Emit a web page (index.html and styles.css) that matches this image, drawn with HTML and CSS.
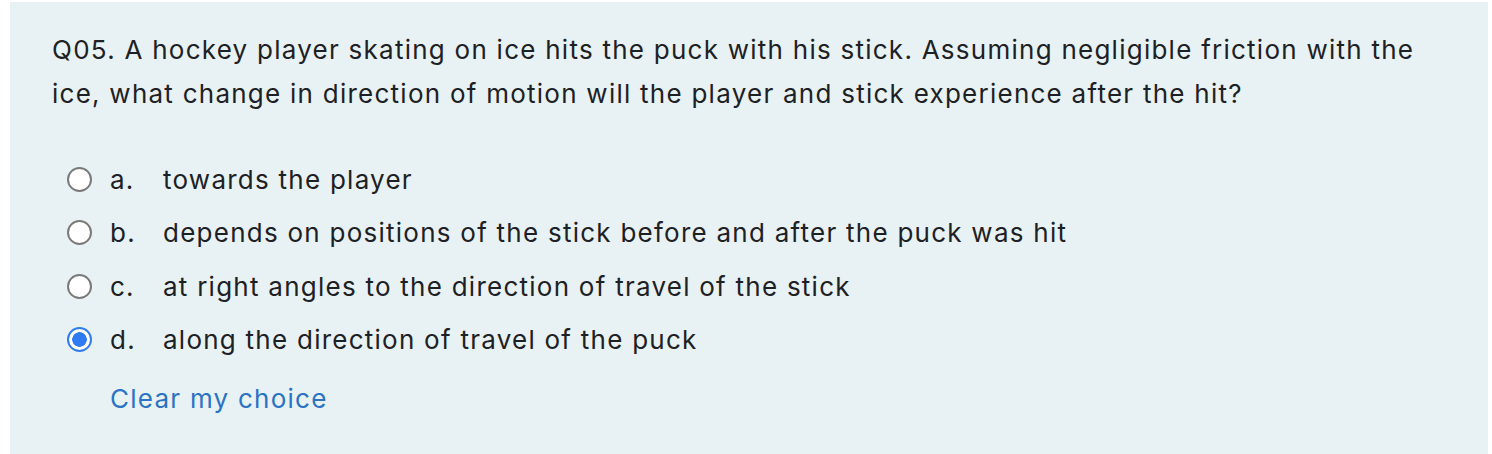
FILE: index.html
```html
<!DOCTYPE html>
<html>
<head>
<meta charset="utf-8">
<link rel="stylesheet" href="styles.css">
</head>
<body>
<div class="formulation">
  <div class="qtext">Q05. A hockey player skating on ice hits the puck with his stick. Assuming negligible friction with the ice, what change in direction of motion will the player and stick experience after the hit?</div>
  <div class="answers">
    <div class="answer"><span class="radio"></span><span class="letter">a.</span><span class="text">towards the player</span></div>
    <div class="answer"><span class="radio"></span><span class="letter">b.</span><span class="text">depends on positions of the stick before and after the puck was hit</span></div>
    <div class="answer"><span class="radio"></span><span class="letter">c.</span><span class="text">at right angles to the direction of travel of the stick</span></div>
    <div class="answer"><span class="radio checked"></span><span class="letter">d.</span><span class="text">along the direction of travel of the puck</span></div>
  </div>
  <div class="clear"><a class="clear-link">Clear my choice</a></div>
</div>
</body>
</html>
```

FILE: styles.css
```css
html, body {
  margin: 0;
  padding: 0;
  background: #ffffff;
}
body {
  padding: 2px 4px 0 10px;
  font-family: Inter, "Noto Sans", sans-serif;
  color: #1d2125;
  letter-spacing: 1.25px;
}
.formulation {
  background: #e8f1f4;
  padding: 26px 42px 40px 42px;
  min-height: 452px;
  box-sizing: border-box;
}
.qtext {
  font-size: 26px;
  line-height: 44px;
}
.answers {
  margin-top: 37px;
  padding-left: 15px;
  display: flex;
  flex-direction: column;
}
.answer {
  display: flex;
  align-items: center;
  height: 53.3px;
  font-size: 26px;
}
.radio {
  width: 21px;
  height: 21px;
  border: 2px solid #7a7a7a;
  border-radius: 50%;
  background: #fff;
  flex: none;
  margin-right: 18px;
}
.radio.checked {
  border: 2px solid #2f7bf4;
  background: radial-gradient(circle, #2f7bf4 0 7px, #fff 7.5px);
}
.letter {
  width: 53px;
  flex: none;
}
.clear {
  padding-left: 58px;
  margin-top: 11px;
  font-size: 26px;
  line-height: 44px;
}
.clear-link {
  color: #2b73c4;
  cursor: pointer;
}
```
